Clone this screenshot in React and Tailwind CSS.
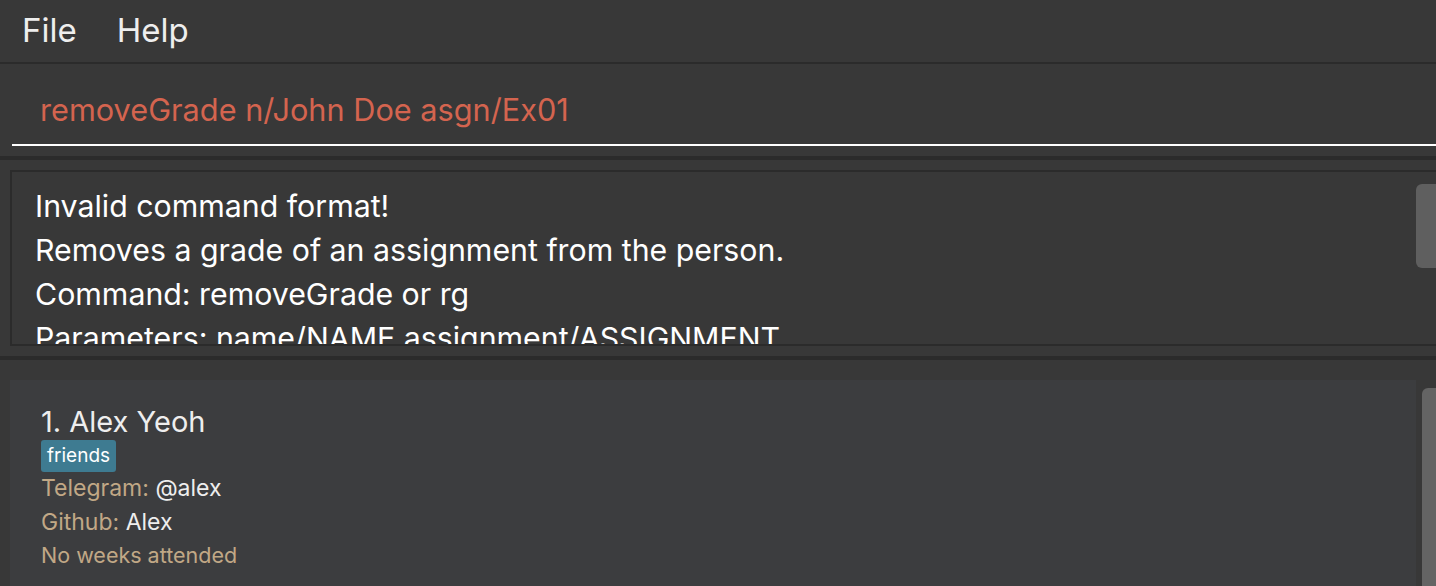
import React from "react";

export default function App() {
  const font = { fontFamily: "Inter, 'Noto Sans', sans-serif" };
  return (
    <div className="w-[1436px] h-[586px] overflow-hidden bg-[#383838] flex flex-col" style={font}>
      {/* Menu bar */}
      <div className="h-[62px] shrink-0 flex items-center pl-[22px] gap-[40px] text-[33px] text-[#eeeeee]">
        <span>File</span>
        <span>Help</span>
      </div>
      <div className="h-[2px] shrink-0 bg-[#2b2b2b]" />
      {/* Command box */}
      <div className="h-[92px] shrink-0 pl-[12px] flex flex-col">
        <div className="h-[80px] flex items-center pl-[28px] text-[30.7px] text-[#d4644f] pt-[12px]">
          removeGrade n/John Doe asgn/Ex01
        </div>
        <div className="h-[2px] bg-white" />
      </div>
      <div className="h-[4px] shrink-0 bg-[#2b2b2b]" />
      {/* Result display */}
      <div className="h-[196px] shrink-0 pt-[10px] pb-[10px] pl-[10px]">
        <div className="relative h-full border-l-2 border-t-2 border-b-2 border-[#2b2b2b] overflow-hidden">
          <div className="pl-[23px] pt-[12px] text-[30.3px] leading-[44px] text-white">
            <div>Invalid command format!</div>
            <div>Removes a grade of an assignment from the person.</div>
            <div>Command: removeGrade or rg</div>
            <div>Parameters: name/NAME assignment/ASSIGNMENT</div>
          </div>
          <div className="absolute right-0 top-[12px] w-[20px] h-[84px] rounded-l-[6px] bg-[#5f5f5f]" />
        </div>
      </div>
      <div className="h-[4px] shrink-0 bg-[#2b2b2b]" />
      {/* Person list */}
      <div className="relative flex-1 pt-[20px] pl-[10px] pr-[20px]">
        <div className="h-full bg-[#3c3d3f] pl-[31px] pt-[24px] flex flex-col">
          <div className="text-[29px] leading-[36px] text-[#eeeeee]">1. Alex Yeoh</div>
          <div className="flex">
            <span className="bg-[#3e7b91] text-white text-[19px] leading-[32px] px-[6px] rounded-[3px]">friends</span>
          </div>
          <div className="text-[23px] leading-[34px] -mt-[1px]">
            <span className="text-[#c1a886]">Telegram: </span>
            <span className="text-[#eeeeee]">@alex</span>
          </div>
          <div className="text-[23px] leading-[34px]">
            <span className="text-[#c1a886]">Github: </span>
            <span className="text-[#eeeeee]">Alex</span>
          </div>
          <div className="text-[21.5px] leading-[32px] text-[#c1a886]">No weeks attended</div>
        </div>
        <div className="absolute right-0 top-[28px] w-[14px] h-[240px] rounded-l-[6px] bg-[#646464]" />
      </div>
    </div>
  );
}
